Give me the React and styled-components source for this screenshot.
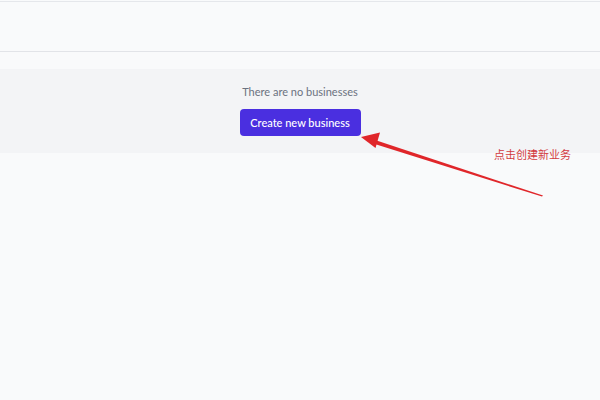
import React from 'react';
import styled, { createGlobalStyle } from 'styled-components';

const GlobalStyle = createGlobalStyle`
    html, body {
        margin: 0;
        padding: 0;
        background: #f9fafb;
    }
    body {
        font-family: Lato, 'Noto Sans', sans-serif;
    }
`;

const App = () => {
    return (
        <Page>
            <GlobalStyle />
            <TopBar />
            <Header />
            <Empty>
                <EmptyText>There are no businesses</EmptyText>
                <CreateButton>Create new business</CreateButton>
            </Empty>

            <Note>点击创建新业务</Note>
            <ArrowLayer width="600" height="400" viewBox="0 0 600 400">
                {/* tapered shaft, thick at the head */}
                <polygon points="372,139 543,195.6 542,196.6 370,142.4" fill="#e0262a" />
                <polygon points="361,137 380,132.5 375.5,148" fill="#e0262a" />
            </ArrowLayer>
        </Page>
    );
};

const Page = styled.div`
    position: relative;
    width: 600px;
    height: 400px;
    overflow: hidden;
    background: #f9fafb;
`;

const TopBar = styled.div`
    height: 1px;
    border-bottom: 1px solid #e5e7eb;
`;

const Header = styled.div`
    height: 49px;
    border-bottom: 1px solid #e2e4e8;
`;

const Empty = styled.div`
    margin-top: 17px;
    height: 84px;
    background: #f3f4f6;
    display: flex;
    flex-direction: column;
    align-items: center;
    box-sizing: border-box;
    padding-top: 15px;
`;

const EmptyText = styled.div`
    font-size: 11px;
    color: #6b7280;
    line-height: 15px;
`;

const CreateButton = styled.button`
    margin-top: 10px;
    width: 121px;
    height: 27px;
    border: none;
    border-radius: 4px;
    background: #4a2fe0;
    color: #ffffff;
    font-family: Lato, 'Noto Sans', sans-serif;
    font-size: 11px;
    font-weight: 500;
    padding: 0;
`;

const Note = styled.div`
    position: absolute;
    left: 494px;
    top: 146px;
    font-family: 'Noto Sans CJK SC', sans-serif;
    font-size: 11px;
    color: #d23a3f;
`;

const ArrowLayer = styled.svg`
    position: absolute;
    left: 0;
    top: 0;
    pointer-events: none;
`;

export default App;
